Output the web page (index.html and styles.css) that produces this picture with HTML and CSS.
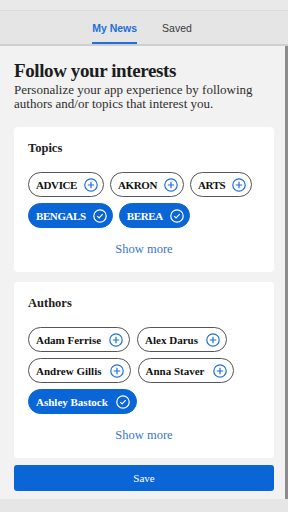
FILE: index.html
```html
<!DOCTYPE html>
<html lang="en">

<head>
    <meta charset="UTF-8">
    <meta name="viewport" content="width=device-width, initial-scale=1.0">
    <title>Follow your interests</title>
    <link rel="stylesheet" href="styles.css">
</head>

<body>
    <!-- 상단 탭 -->
    <div class="top__strip"></div>
    <div class="tabs">
        <span class="tab active">My News</span>
        <span class="tab">Saved</span>
    </div>

    <div class="main">
        <h1 class="title">Follow your interests</h1>
        <p class="desc">Personalize your app experience by following authors and/or topics that interest you.</p>

        <!-- 토픽 -->
        <div class="card">
            <h2 class="card__title">Topics</h2>
            <div class="chips upper">
                <span class="chip">ADVICE <svg class="ico" viewBox="0 0 14 14"><circle cx="7" cy="7" r="6.2"/><path d="M7 3.8v6.4M3.8 7h6.4"/></svg></span>
                <span class="chip">AKRON <svg class="ico" viewBox="0 0 14 14"><circle cx="7" cy="7" r="6.2"/><path d="M7 3.8v6.4M3.8 7h6.4"/></svg></span>
                <span class="chip">ARTS <svg class="ico" viewBox="0 0 14 14"><circle cx="7" cy="7" r="6.2"/><path d="M7 3.8v6.4M3.8 7h6.4"/></svg></span>
                <span class="chip on">BENGALS <svg class="ico" viewBox="0 0 14 14"><circle cx="7" cy="7" r="6.2"/><path d="M4.3 7.2l1.8 1.8 3.6-3.8"/></svg></span>
                <span class="chip on">BEREA <svg class="ico" viewBox="0 0 14 14"><circle cx="7" cy="7" r="6.2"/><path d="M4.3 7.2l1.8 1.8 3.6-3.8"/></svg></span>
            </div>
            <div class="more">Show more</div>
        </div>

        <!-- 작가 -->
        <div class="card">
            <h2 class="card__title">Authors</h2>
            <div class="chips">
                <span class="chip">Adam Ferrise <svg class="ico" viewBox="0 0 14 14"><circle cx="7" cy="7" r="6.2"/><path d="M7 3.8v6.4M3.8 7h6.4"/></svg></span>
                <span class="chip">Alex Darus <svg class="ico" viewBox="0 0 14 14"><circle cx="7" cy="7" r="6.2"/><path d="M7 3.8v6.4M3.8 7h6.4"/></svg></span>
                <span class="chip">Andrew Gillis <svg class="ico" viewBox="0 0 14 14"><circle cx="7" cy="7" r="6.2"/><path d="M7 3.8v6.4M3.8 7h6.4"/></svg></span>
                <span class="chip">Anna Staver <svg class="ico" viewBox="0 0 14 14"><circle cx="7" cy="7" r="6.2"/><path d="M7 3.8v6.4M3.8 7h6.4"/></svg></span>
                <span class="chip on">Ashley Bastock <svg class="ico" viewBox="0 0 14 14"><circle cx="7" cy="7" r="6.2"/><path d="M4.3 7.2l1.8 1.8 3.6-3.8"/></svg></span>
            </div>
            <div class="more">Show more</div>
        </div>

        <button class="save__btn">Save</button>
    </div>

    <div class="bottom__strip"></div>
</body>

</html>
```

FILE: styles.css
```css
* {
    margin: 0;
    padding: 0;
    box-sizing: border-box;
}

body {
    width: 288px;
    height: 512px;
    overflow: hidden;
    background-color: #f2f2f2;
    font-family: "Liberation Serif", serif;
    display: flex;
    flex-direction: column;
}

.top__strip {
    flex-shrink: 0;
    height: 11px;
    background-color: #e9e9e9;
    border-bottom: 1px solid #dcdcdc;
}

.tabs {
    flex-shrink: 0;
    height: 35px;
    background-color: #e5e5e5;
    border-bottom: 2px solid #cfcfcf;
    display: flex;
    justify-content: center;
    gap: 25px;
    padding-right: 4px;
    font-family: "Liberation Sans", sans-serif;
    font-size: 10.5px;
}

.tab {
    color: #3a3a3a;
    line-height: 34px;
    height: 33px;
}

.tab.active {
    color: #1f6fdc;
    font-weight: bold;
    border-bottom: 2px solid #1f6fdc;
}

.main {
    flex: 1;
    min-height: 0;
    padding: 14px 11px 0 14px;
    border-right: 3px solid #8c8c8c;
}

.title {
    font-size: 19px;
    line-height: 22px;
    letter-spacing: -0.4px;
    color: #1c1c1c;
}

.desc {
    margin-top: 1px;
    font-size: 13px;
    line-height: 14px;
    color: #2e2e2e;
}

.card {
    background-color: #fff;
    border-radius: 4px;
    padding: 13px 14px 15px;
    margin-top: 16px;
}

.card + .card {
    margin-top: 10px;
}

.card__title {
    font-size: 12.5px;
    line-height: 16px;
    color: #222;
}

.chips {
    margin-top: 16px;
    display: flex;
    flex-wrap: wrap;
    gap: 6px 7px;
}

.chip {
    display: inline-flex;
    align-items: center;
    gap: 8px;
    height: 25px;
    padding: 0 6px 0 7px;
    border: 1px solid #555;
    border-radius: 13px;
    font-size: 11px;
    font-weight: bold;
    color: #111;
}

.chips.upper {
    gap: 6px;
}

.chips.upper .chip {
    gap: 7px;
    padding-right: 5px;
    letter-spacing: -0.4px;
}

.ico {
    width: 14px;
    height: 14px;
    fill: none;
    stroke: #1f6fdc;
    stroke-width: 1.2;
}

.chip.on {
    background-color: #0a66d6;
    border-color: #0a66d6;
    color: #fff;
}

.chip.on .ico {
    stroke: #fff;
}

.more {
    margin-top: 13px;
    text-align: center;
    font-size: 12.5px;
    line-height: 16px;
    color: #3a74d2;
}

.save__btn {
    display: block;
    width: 100%;
    height: 26px;
    margin-top: 7px;
    border: 0;
    border-radius: 3px;
    background-color: #0a66d6;
    color: #fff;
    font-family: "Liberation Serif", serif;
    font-size: 11px;
}

.bottom__strip {
    flex-shrink: 0;
    height: 13px;
    background-color: #e6e6e6;
}
```
